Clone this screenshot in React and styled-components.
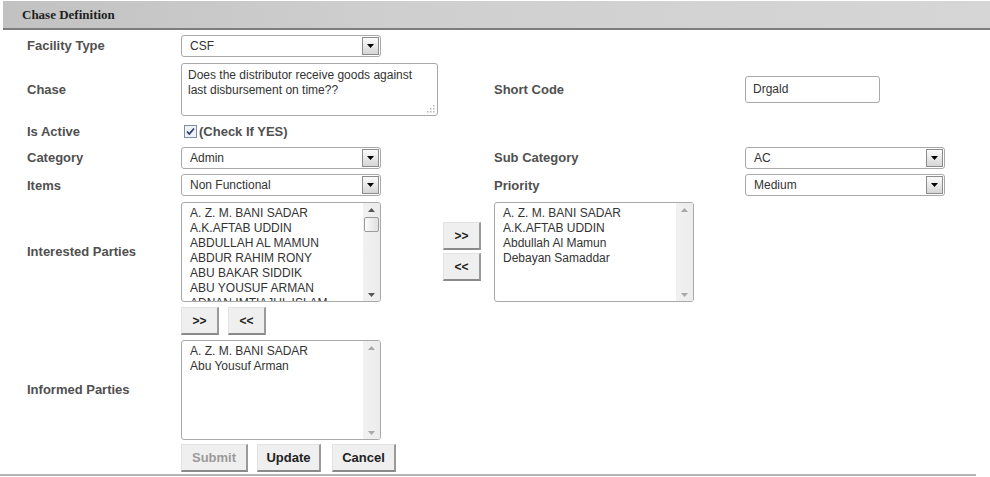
import React from "react";
import styled, { createGlobalStyle } from "styled-components";

const Global = createGlobalStyle`
  html, body { margin: 0; padding: 0; background: #fff; }
  body { font-family: "Liberation Sans", Arial, sans-serif; }
  * { box-sizing: border-box; }
`;

const Page = styled.div`
  width: 990px;
  height: 477px;
  overflow: hidden;
`;

const Header = styled.div`
  margin: 1px 0 0 3px;
  height: 29px;
  padding-left: 19px;
  display: flex;
  align-items: center;
  background: linear-gradient(to right, #c2c2c2, #cfcfcf 40%, #d6d6d6);
  border-bottom: 2px solid #7d7d7d;
  font-family: "Liberation Serif", "Times New Roman", serif;
  font-weight: bold;
  font-size: 13px;
  color: #1e1e1e;
`;

const Form = styled.div`
  display: grid;
  grid-template-columns: 154px 313px 251px 1fr;
  grid-template-rows: 23px 54px 20px 23px 22px 101px 28px 99px 28px;
  row-gap: 5px;
  padding: 4px 0 0 27px;
  align-items: center;
  align-content: start;
  height: 446px;
  border-bottom: 2px solid #b4b4b4;
  margin-right: 14px;
`;

const Label = styled.div`
  font-weight: bold;
  font-size: 13px;
  color: #505050;
`;

const Cell = styled.div`
  display: flex;
  align-items: center;
  grid-column: ${(p) => p.$col || "auto"};
  gap: ${(p) => p.$gap || 0}px;
`;

const SelectBox = styled.div`
  width: ${(p) => p.$w}px;
  height: 22px;
  border: 1px solid #a9a9a9;
  border-radius: 3px;
  display: flex;
  align-items: center;
  justify-content: space-between;
  padding-left: 8px;
  font-size: 12px;
  color: #333;
  background: #fff;
`;

const Arrow = styled.div`
  width: 17px;
  height: 18px;
  margin-right: 1px;
  border: 1px solid #8c8c8c;
  background: linear-gradient(#fbfbfb, #d6d6d6);
  display: flex;
  align-items: center;
  justify-content: center;
`;

const Select = ({ value, w = 200 }) => (
  <SelectBox $w={w}>
    <span>{value}</span>
    <Arrow>
      <svg width="7" height="4" viewBox="0 0 7 4">
        <path d="M0 0h7L3.5 4z" fill="#000" />
      </svg>
    </Arrow>
  </SelectBox>
);

const TextArea = styled.div`
  position: relative;
  width: 257px;
  height: 53px;
  border: 1px solid #a9a9a9;
  border-radius: 3px;
  padding: 4px 6px;
  font-size: 12px;
  line-height: 15px;
  color: #333;
`;

const Grip = styled.svg`
  position: absolute;
  right: 2px;
  bottom: 2px;
`;

const Input = styled.div`
  width: 135px;
  height: 27px;
  border: 1px solid #a9a9a9;
  border-radius: 3px;
  padding-left: 7px;
  display: flex;
  align-items: center;
  font-size: 12px;
  color: #333;
`;

const CheckWrap = styled.label`
  display: flex;
  align-items: center;
  gap: 2px;
  margin-left: 3px;
  font-weight: bold;
  font-size: 13px;
  color: #505050;
`;

const ListBox = styled.div`
  width: 200px;
  height: 100px;
  border: 1px solid #a9a9a9;
  border-radius: 3px;
  overflow: hidden;
  display: flex;
`;

const Options = styled.div`
  flex: 1;
  padding: 3px 0 0 8px;
  font-size: 12px;
  line-height: 15px;
  color: #333;
  white-space: nowrap;
  overflow: hidden;
`;

const Scroll = styled.div`
  width: 17px;
  background: linear-gradient(to right, #f1f1f1, #ececec);
  display: flex;
  flex-direction: column;
  align-items: center;
  padding: 5px 0 4px;
`;

const Thumb = styled.div`
  width: 15px;
  height: 15px;
  margin-top: 5px;
  border: 1px solid #9c9c9c;
  border-radius: 2px;
  background: linear-gradient(to right, #fafafa, #e0e0e0);
`;

const Spacer = styled.div`
  flex: 1;
`;

const Tri = ({ up, color }) => (
  <svg width="7" height="4" viewBox="0 0 7 4">
    <path d={up ? "M0 4h7L3.5 0z" : "M0 0h7L3.5 4z"} fill={color} />
  </svg>
);

const List = ({ items, thumb }) => (
  <ListBox>
    <Options>
      {items.map((t) => (
        <div key={t}>{t}</div>
      ))}
    </Options>
    <Scroll>
      <Tri up color={thumb ? "#555" : "#a8a8a8"} />
      {thumb && <Thumb />}
      <Spacer />
      <Tri color={thumb ? "#555" : "#a8a8a8"} />
    </Scroll>
  </ListBox>
);

const Button = styled.button`
  height: 28px;
  width: ${(p) => p.$w}px;
  margin-left: ${(p) => p.$ml || 0}px;
  padding: 0;
  font-family: "Liberation Sans", Arial, sans-serif;
  font-weight: bold;
  font-size: ${(p) => p.$fs || 13}px;
  color: ${(p) => (p.disabled ? "#9a9a9a" : "#222")};
  background: #efefef;
  border-top: 1px solid #e2e2e2;
  border-left: 1px solid #e2e2e2;
  border-right: 2px solid #9a9a9a;
  border-bottom: 2px solid #8a8a8a;
  border-radius: 0;
`;

const MoveCol = styled.div`
  display: flex;
  flex-direction: column;
  gap: 3px;
  margin-left: 62px;
`;

const interested = [
  "A. Z. M. BANI SADAR",
  "A.K.AFTAB UDDIN",
  "ABDULLAH AL MAMUN",
  "ABDUR RAHIM RONY",
  "ABU BAKAR SIDDIK",
  "ABU YOUSUF ARMAN",
  "ADNAN IMTIAJUL ISLAM",
];

export default function App() {
  return (
    <Page>
      <Global />
      <Header>Chase Definition</Header>
      <Form>
        <Label>Facility Type</Label>
        <Cell $col="2 / 5">
          <Select value="CSF" />
        </Cell>

        <Label>Chase</Label>
        <Cell>
          <TextArea>
            Does the distributor receive goods against last disbursement on time??
            <Grip width="8" height="8" viewBox="0 0 8 8">
              <g fill="#b8b8b8">
                <rect x="6" y="0" width="1.5" height="1.5" />
                <rect x="3" y="3" width="1.5" height="1.5" />
                <rect x="6" y="3" width="1.5" height="1.5" />
                <rect x="0" y="6" width="1.5" height="1.5" />
                <rect x="3" y="6" width="1.5" height="1.5" />
                <rect x="6" y="6" width="1.5" height="1.5" />
              </g>
            </Grip>
          </TextArea>
        </Cell>
        <Label>Short Code</Label>
        <Cell>
          <Input>Drgald</Input>
        </Cell>

        <Label>Is Active</Label>
        <Cell $col="2 / 5">
          <CheckWrap>
            <svg width="13" height="13" viewBox="0 0 13 13">
              <rect x="0.5" y="0.5" width="12" height="12" fill="#eef1f6" stroke="#7f8ea8" />
              <path d="M3 6.5l2.3 2.5L10 3.5" stroke="#2a3d6e" strokeWidth="1.8" fill="none" />
            </svg>
            (Check If YES)
          </CheckWrap>
        </Cell>

        <Label>Category</Label>
        <Cell>
          <Select value="Admin" />
        </Cell>
        <Label>Sub Category</Label>
        <Cell>
          <Select value="AC" />
        </Cell>

        <Label>Items</Label>
        <Cell>
          <Select value="Non Functional" />
        </Cell>
        <Label>Priority</Label>
        <Cell>
          <Select value="Medium" />
        </Cell>

        <Label>Interested Parties</Label>
        <Cell>
          <List items={interested} thumb />
          <MoveCol>
            <Button $w={38} $fs={12}>&gt;&gt;</Button>
            <Button $w={38} $fs={12}>&lt;&lt;</Button>
          </MoveCol>
        </Cell>
        <Cell $col="3 / 5">
          <List
            items={[
              "A. Z. M. BANI SADAR",
              "A.K.AFTAB UDDIN",
              "Abdullah Al Mamun",
              "Debayan Samaddar",
            ]}
          />
        </Cell>

        <Cell $col="2 / 5" $gap={9}>
          <Button $w={38} $fs={12}>&gt;&gt;</Button>
          <Button $w={38} $fs={12}>&lt;&lt;</Button>
        </Cell>

        <Label>Informed Parties</Label>
        <Cell $col="2 / 5">
          <List items={["A. Z. M. BANI SADAR", "Abu Yousuf Arman"]} />
        </Cell>

        <Cell $col="2 / 5">
          <Button $w={67} disabled>Submit</Button>
          <Button $w={64} $ml={9}>Update</Button>
          <Button $w={64} $ml={11}>Cancel</Button>
        </Cell>
      </Form>
    </Page>
  );
}
